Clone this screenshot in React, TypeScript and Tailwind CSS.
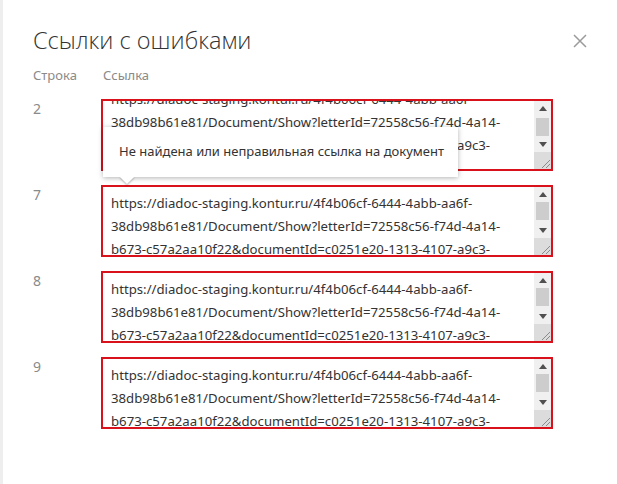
import React from "react";

const LINES = [
  "https://diadoc-staging.kontur.ru/4f4b06cf-6444-4abb-aa6f-",
  "38db98b61e81/Document/Show?letterId=72558c56-f74d-4a14-",
  "b673-c57a2aa10f22&documentId=c0251e20-1313-4107-a9c3-",
  "a1b2c3d4e5f6",
];

function ArrowUp() {
  return (
    <svg width="8" height="5" viewBox="0 0 8 5">
      <path d="M0 5 L4 0 L8 5 Z" fill="#505050" />
    </svg>
  );
}
function ArrowDown() {
  return (
    <svg width="8" height="5" viewBox="0 0 8 5">
      <path d="M0 0 L4 5 L8 0 Z" fill="#505050" />
    </svg>
  );
}

function LinkBox({ scrolled }: { scrolled?: boolean }) {
  return (
    <div className="flex h-[72px] w-[452px] border-2 border-[#d8111b] bg-white">
      <div className="relative flex-1 overflow-hidden">
        <div
          className={
            "pl-[8px] pt-[5px] text-[13.2px] leading-[23px] text-[#333] " +
            (scrolled ? "-mt-[18px]" : "")
          }
        >
          {LINES.map((l, i) => (
            <div key={i} className="whitespace-nowrap">
              {l}
            </div>
          ))}
        </div>
      </div>
      <div className="flex w-[17px] flex-col bg-[#f0f0f0]">
        <div className="flex h-[15px] items-center justify-center">
          <ArrowUp />
        </div>
        <div className="h-[21px] px-[2px]">
          <div
            className={
              "h-[18px] bg-[#cdcdcd] " + (scrolled ? "mt-[2px]" : "mt-0")
            }
          />
        </div>
        <div className="flex h-[15px] items-center justify-center">
          <ArrowDown />
        </div>
        <div className="flex flex-1 items-end justify-end bg-[#dcdcdc]">
          <svg width="12" height="12" viewBox="0 0 12 12">
            <path d="M11 3 L3 11 M11 7 L7 11" stroke="#8a8a8a" strokeWidth="1" />
          </svg>
        </div>
      </div>
    </div>
  );
}

export default function App() {
  const rows = [
    { n: "2", scrolled: true },
    { n: "7" },
    { n: "8" },
    { n: "9" },
  ];
  return (
    <div
      className="relative h-[484px] w-[617px] overflow-hidden border-l-[3px] border-[#eeeeee] bg-white"
      style={{ fontFamily: '"Noto Sans", "Open Sans", sans-serif' }}
    >
      <div className="pl-[30px] pt-[22px]">
        <div className="flex items-center justify-between pr-[30px]">
          <h1
            className="text-[23.5px] font-light leading-[36px] text-[#333]"
            style={{ fontFamily: '"Open Sans", "Noto Sans", sans-serif' }}
          >
            Ссылки с ошибками
          </h1>
          <svg width="14" height="14" viewBox="0 0 14 14" className="mt-[1px]">
            <path
              d="M1 1 L13 13 M13 1 L1 13"
              stroke="#9b9b9b"
              strokeWidth="1.5"
            />
          </svg>
        </div>
        <div className="mt-[8px] flex text-[13px] leading-[18px] text-[#8a8a8a]">
          <div className="w-[70px]">Строка</div>
          <div>Ссылка</div>
        </div>
        <div className="mt-[15px] flex flex-col gap-[14px]">
          {rows.map((r) => (
            <div key={r.n} className="flex">
              <div className="w-[68px] pt-[1px] text-[14px] leading-[18px] text-[#8a8a8a]">
                {r.n}
              </div>
              <LinkBox scrolled={r.scrolled} />
            </div>
          ))}
        </div>
      </div>

      <div className="absolute left-[100px] top-[127px] h-[50px] w-[355px] bg-white shadow-[0_1px_5px_rgba(0,0,0,0.3)]">
        <div className="absolute bottom-[-5px] left-[19px] h-[10px] w-[10px] rotate-45 bg-white shadow-[1px_1px_2px_rgba(0,0,0,0.25)]" />
        <div className="relative flex h-full items-center bg-white pl-[16px] text-[13px] text-[#333]">
          Не найдена или неправильная ссылка на документ
        </div>
      </div>
    </div>
  );
}
